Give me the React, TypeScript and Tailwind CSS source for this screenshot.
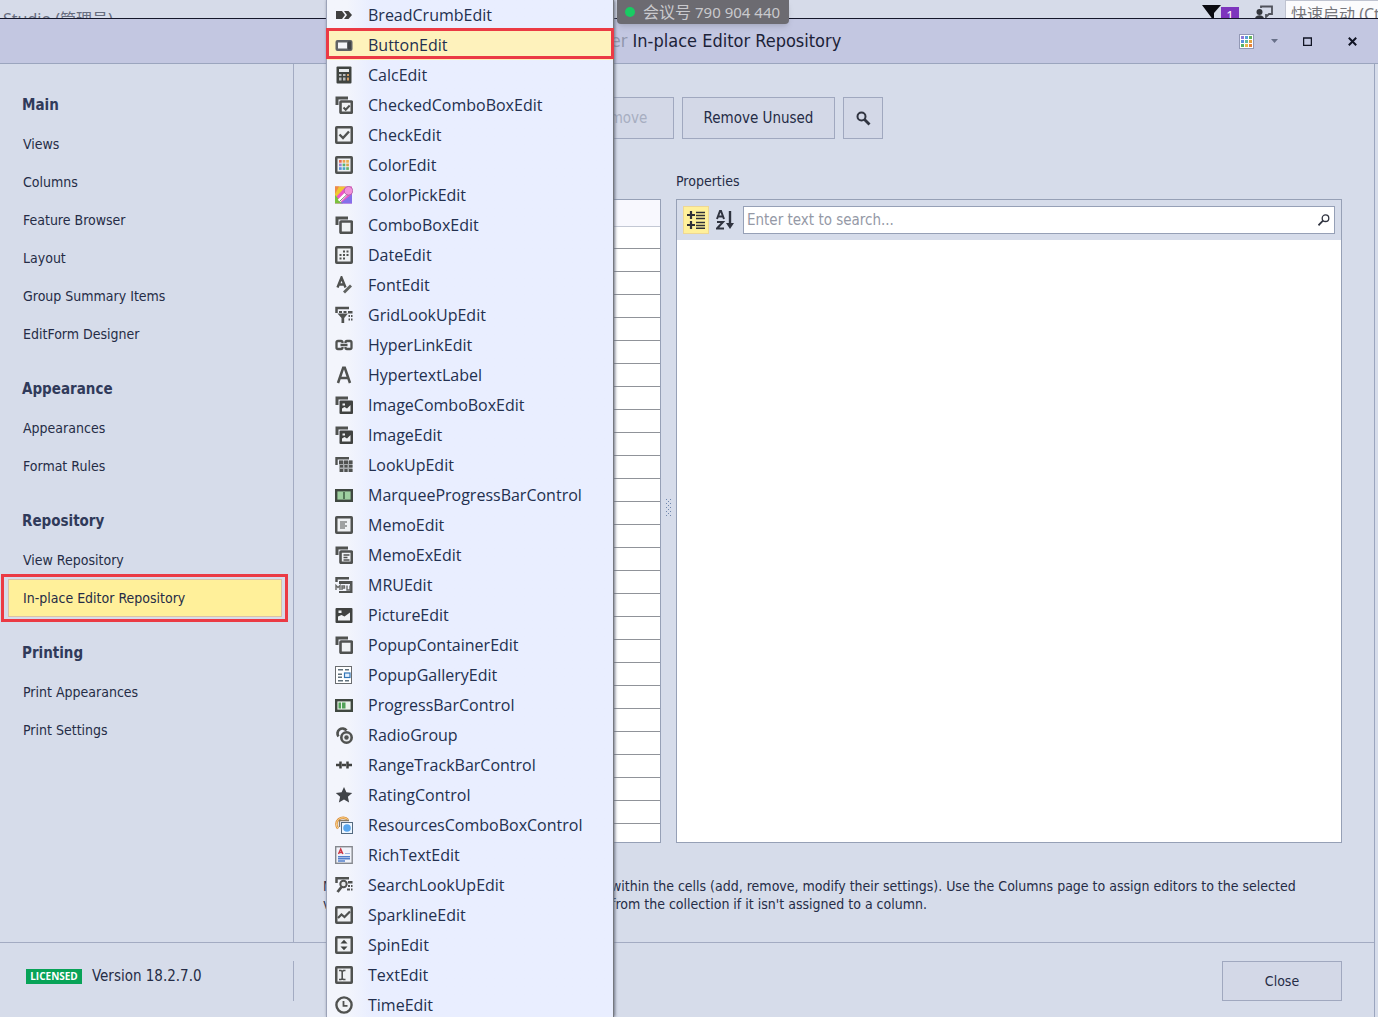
import type { ReactNode } from "react";
import { clsx } from "clsx";

interface NavGroup {
  title: string;
  items: string[];
}

const NAV_GROUPS: NavGroup[] = [
  {
    title: "Main",
    items: [
      "Views",
      "Columns",
      "Feature Browser",
      "Layout",
      "Group Summary Items",
      "EditForm Designer",
    ],
  },
  { title: "Appearance", items: ["Appearances", "Format Rules"] },
  { title: "Repository", items: ["View Repository", "In-place Editor Repository"] },
  { title: "Printing", items: ["Print Appearances", "Print Settings"] },
];

const SELECTED_PAGE = "In-place Editor Repository";
const SELECTED_EDITOR = "ButtonEdit";
const GRID_ROWS = 26;

const INK = "#505250";
const BACK_SHEET = <path d="M2 9V2h11" fill="none" stroke={INK} strokeWidth="3" />;
const FRAME = <rect x="1.25" y="1.25" width="15.5" height="15.5" rx="0.5" fill="#f0f2f4" stroke={INK} strokeWidth="2.5" />;
const FRONT_SHEET = (
  <>
    {BACK_SHEET}
    <rect x="5.5" y="5.5" width="11.300" height="11.300" rx="0.5" fill="#f0f2f4" stroke={INK} strokeWidth="2.6" />
  </>
);
const GRID_CELLS = (
  <>
    <path d="M4 4.500h13.500V16H4z" fill="#a9acae" />
    <path
      d="M4 4.500h4v3.500H4zM9 4.500h4v3.500H9zM14 4.500h3.500v3.500H14zM5 9h3v2.500H5zM9.500 9h3v2.500h-3zM14 9h3.500v2.500H14zM5 13h3v3H5zM9.500 13h3v3h-3zM14 13h3.500v3H14z"
      fill={INK}
    />
  </>
);
const SWATCHES = ["#e86a52", "#f0a050", "#e9b14e", "#9b7fd1", "#58b072", "#d8a24a", "#5a92d8", "#4ca6c8", "#63b36b"];
const SKIN_SWATCHES = ["#8f7ad8", "#58a0dc", "#62b45c", "#5d8fe0", "#63b9a0", "#e3a13c", "#55b06a", "#e9b94a", "#e58038"];

interface SwatchesProps {
  x: number;
  y: number;
  size: number;
  step: number;
  colors?: string[];
}

function Swatches({ x, y, size, step, colors = SWATCHES }: SwatchesProps) {
  return (
    <>
      {colors.map((color, i) => (
        <rect
          key={i}
          x={x + (i % 3) * step}
          y={y + Math.floor(i / 3) * step}
          width={size}
          height={size}
          fill={color}
        />
      ))}
    </>
  );
}

const PICTURE_FRONT = (
  <>
    {BACK_SHEET}
    <rect x="4.500" y="4.500" width="13.500" height="13.500" rx="1" fill="#404240" />
    <path d="M7 15.500v-3l2.500-1.500 2.500 1.500 3.500-3.500v6.500z" fill="#f0f2f4" />
    <rect x="7.500" y="7.500" width="2.500" height="2" fill="#f0f2f4" />
  </>
);

const EDITORS: { name: string; icon: ReactNode }[] = [
  {
    name: "BreadCrumbEdit",
    icon: (
      <>
        <path d="M1 5h6l3 4-3 4H1z" fill="#404040" />
        <path d="M9 5h4.500L17 9l-3.500 4H9l3-4z" fill="#404040" />
      </>
    ),
  },
  {
    name: "ButtonEdit",
    icon: (
      <>
        <rect x="0.500" y="4" width="17" height="11" rx="2" fill="#606265" />
        <rect x="3" y="6.500" width="9" height="6" fill="#f5f5f8" />
        <rect x="13" y="5.500" width="3" height="8" fill="#404245" />
      </>
    ),
  },
  {
    name: "CalcEdit",
    icon: (
      <>
        <rect x="1.500" y="0.500" width="15" height="17" rx="1" fill="#404440" />
        <rect x="4" y="3" width="10" height="3" fill="#e9ecee" />
        <path d="M4 8h2.500v2H4zM8 8h2.500v2H8zM4 11.500h2.500v3H4zM8 11.500h2.500v3H8z" fill="#b9bbbc" />
        <path d="M12 8h2v2h-2zM12 11.500h2v3h-2z" fill="#d09a62" />
      </>
    ),
  },
  {
    name: "CheckedComboBoxEdit",
    icon: (
      <>
        {FRONT_SHEET}
        <path d="m8.500 11.500 2.200 2.200 4-4.200" fill="none" stroke={INK} strokeWidth="2" />
      </>
    ),
  },
  {
    name: "CheckEdit",
    icon: (
      <>
        {FRAME}
        <path d="m4.500 8.500 3.500 3.500 6-6.500" fill="none" stroke={INK} strokeWidth="2.400" />
      </>
    ),
  },
  {
    name: "ColorEdit",
    icon: (
      <>
        {FRAME}
        <Swatches x={4} y={4} size={2.7} step={3.6} />
      </>
    ),
  },
  {
    name: "ColorPickEdit",
    icon: (
      <>
        <rect x="0" y="0.500" width="17" height="17" fill="#ee55c8" />
        <path d="M0 .5h11L0 12z" fill="#efc832" />
        <path d="M0 .5h4L0 8z" fill="#ee8a4a" />
        <path d="M0 17.500V9l8 8.500z" fill="#7cc23e" />
        <path d="M5 17.500 17 8v9.500z" fill="#8470ea" />
        <path d="m11 8-7 7" stroke="#fff" strokeWidth="3.500" />
        <path d="m12.500 8-8 7.500" stroke="#555" strokeWidth=".8" />
        <circle cx="13.500" cy="4.800" r="4.300" fill="#f290da" stroke="#a75b9d" strokeWidth=".8" />
      </>
    ),
  },
  { name: "ComboBoxEdit", icon: FRONT_SHEET },
  {
    name: "DateEdit",
    icon: (
      <>
        {FRAME}
        <path
          d="M8 4.500h2v2H8zM11.500 4.500h2v2h-2zM4.500 8h2v2h-2zM8 8h2v2H8zM11.500 8h2v2h-2zM4.500 11.500h2v2h-2zM8 11.500h2v2H8z"
          fill={INK}
        />
      </>
    ),
  },
  {
    name: "FontEdit",
    icon: (
      <>
        <path d="m2.500 11.500 4-10 4 10M4 8.500h5" fill="none" stroke={INK} strokeWidth="2.400" />
        <path d="m9 16.500 7-7" stroke="#606360" strokeWidth="2.800" />
      </>
    ),
  },
  {
    name: "GridLookUpEdit",
    icon: (
      <>
        <path d="M1.500 7V2H14" fill="none" stroke={INK} strokeWidth="2.500" />
        <path d="M4 5h3v2H4zM8.500 5h3v2h-3zM13 5h4.500v2.500H13zM13.500 9h1.500v2h-1.500zM16 9h1.500v2H16zM13.500 12.500h1.500v2h-1.500zM16 12.500h1.500v2H16z" fill={INK} />
        <path d="M2.500 7.500H13l-3.800 4.500v5H6.500v-5z" fill={INK} />
      </>
    ),
  },
  {
    name: "HyperLinkEdit",
    icon: (
      <path
        d="M7.500 7V6.500Q7.500 5 6 5H3Q1.500 5 1.500 6.500v5Q1.500 13 3 13h3q1.500 0 1.500-1.500V11M10.500 7V6.500Q10.500 5 12 5h3q1.500 0 1.500 1.500v5Q16.500 13 15 13h-3q-1.500 0-1.500-1.500V11M5.500 9h7"
        fill="none"
        stroke={INK}
        strokeWidth="2.300"
      />
    ),
  },
  {
    name: "HypertextLabel",
    icon: <path d="M3 17 8.200 1.800h1.600L15 17M5 12h8" fill="none" stroke={INK} strokeWidth="2.500" />,
  },
  { name: "ImageComboBoxEdit", icon: PICTURE_FRONT },
  { name: "ImageEdit", icon: PICTURE_FRONT },
  {
    name: "LookUpEdit",
    icon: (
      <>
        <path d="M1.500 9V2.300H14" fill="none" stroke={INK} strokeWidth="2.400" />
        {GRID_CELLS}
      </>
    ),
  },
  {
    name: "MarqueeProgressBarControl",
    icon: (
      <>
        <rect x="1.200" y="4.200" width="15.600" height="10.600" fill="#9fd0a0" stroke="#404840" strokeWidth="2.400" />
        <path d="M9 6v7" stroke="#3c5c40" strokeWidth="1.500" />
      </>
    ),
  },
  {
    name: "MemoEdit",
    icon: (
      <>
        {FRAME}
        <path d="M5 6h7M5 8h5M5 10h7M5 12h5" stroke={INK} strokeWidth="1.200" />
      </>
    ),
  },
  {
    name: "MemoExEdit",
    icon: (
      <>
        {FRONT_SHEET}
        <path d="M8.500 9h6M8.500 11.500h4M8.500 14h6" stroke={INK} strokeWidth="1.300" />
      </>
    ),
  },
  {
    name: "MRUEdit",
    icon: (
      <>
        <path d="M1.500 6V2.300H14" fill="none" stroke={INK} strokeWidth="2.400" />
        <path d="M4 5h13.500v12H4v-2h11V8H4z" fill={INK} />
        <path d="M1 14V9.500l2 2 2-2V14M7 14V10h2.500v2H7M12 9.500V14h3V9.500" fill="none" stroke="#686a68" strokeWidth="1.400" />
      </>
    ),
  },
  {
    name: "PictureEdit",
    icon: (
      <>
        <rect x="0.500" y="2" width="17" height="15" rx="1" fill="#404240" />
        <path d="M3 14.500v-4L6.500 9l3 1.500L15 6.500v8z" fill="#f0f2f4" />
        <rect x="3.500" y="4.500" width="3" height="2.500" fill="#f0f2f4" />
      </>
    ),
  },
  { name: "PopupContainerEdit", icon: FRONT_SHEET },
  {
    name: "PopupGalleryEdit",
    icon: (
      <>
        <rect x="0.500" y="0.500" width="16" height="17" fill="#fff" stroke="#6a6d70" />
        <path d="M3 3h5v1.500H3zM10 3h4v1.500h-4zM3 7.500h4V9H3zM3 10.500h4V12H3zM3 14h5v1.500H3zM10 14h4v1.500h-4z" fill="#60717c" />
        <rect x="9.500" y="7" width="5.500" height="4.500" fill="#e1efff" stroke="#3275b5" strokeWidth="1.200" />
      </>
    ),
  },
  {
    name: "ProgressBarControl",
    icon: (
      <>
        <rect x="1.200" y="4.200" width="15.600" height="10.600" fill="#eaf3ea" stroke="#404840" strokeWidth="2.400" />
        <path d="M3.500 6.500H6v6H3.500zM7 6.500h3.500v6H7z" fill="#51a257" />
      </>
    ),
  },
  {
    name: "RadioGroup",
    icon: (
      <>
        <path d="M3.500 10.500a5 5 0 1 1 8-6" fill="none" stroke={INK} strokeWidth="2.700" />
        <circle cx="11.500" cy="11.500" r="5.200" fill="#e8eaec" stroke={INK} strokeWidth="2.600" />
        <circle cx="11.500" cy="11.500" r="2.200" fill={INK} />
      </>
    ),
  },
  {
    name: "RangeTrackBarControl",
    icon: <path d="M1 9h4M7 9h4M13 9h4M5.500 5.500v7M12.500 5.500v7" stroke="#404240" strokeWidth="2.500" />,
  },
  {
    name: "RatingControl",
    icon: (
      <path d="m9 1 2.400 5.300 5.800.6-4.300 3.900 1.200 5.700L9 13.600l-5.100 2.900 1.200-5.700L.8 6.900l5.800-.6z" fill="#404348" />
    ),
  },
  {
    name: "ResourcesComboBoxControl",
    icon: (
      <>
        <path d="M3 12.500A6 6 0 1 1 13 4" fill="none" stroke="#e0913a" strokeWidth="2.500" />
        <path d="M3 12.500A6 6 0 1 1 13 4" fill="none" stroke="#f7d690" strokeWidth="1" />
        <path d="M4.500 11V4.500H14" fill="none" stroke="#8a7c66" strokeWidth="1.300" />
        <rect x="6.500" y="6.500" width="11" height="11" fill="#edf6ff" stroke="#546a80" />
        <circle cx="12" cy="12" r="3.800" fill="#58a6ee" />
      </>
    ),
  },
  {
    name: "RichTextEdit",
    icon: (
      <>
        <rect x="0.700" y="0.700" width="16.500" height="16.600" fill="#f1f3fa" stroke="#85888e" strokeWidth="1.400" />
        <path d="m3.500 8 2.200-5 2.200 5M4.500 6.500H7" fill="none" stroke="#cd3946" strokeWidth="1.400" />
        <path d="M10 7.500h5" stroke="#9cb4dd" />
        <path d="M3 10h12v1.500H3zM3 12h12v1.500H3zM3 14.200h7v1.500H3z" fill="#5280cc" />
      </>
    ),
  },
  {
    name: "SearchLookUpEdit",
    icon: (
      <>
        <path d="M1.500 7V2.300H14" fill="none" stroke={INK} strokeWidth="2.500" />
        <circle cx="8.500" cy="8" r="3.200" fill="#e8eaec" stroke={INK} strokeWidth="2" />
        <path d="m6.500 11-4 5" stroke={INK} strokeWidth="2.800" />
        <path d="M13 5h4.500v2.500H13zM13 9h2v2h-2zM16 9h1.500v2H16zM12 12.500h3v2h-3zM16 12.500h1.500v2H16z" fill={INK} />
      </>
    ),
  },
  {
    name: "SparklineEdit",
    icon: (
      <>
        {FRAME}
        <path d="m3 12 3.500-3.500L9.500 11 15 5.500" fill="none" stroke={INK} strokeWidth="2.200" />
      </>
    ),
  },
  {
    name: "SpinEdit",
    icon: (
      <>
        {FRAME}
        <path d="m9 3.800 3.500 3.700h-7zM9 14.200 5.500 10.500h7z" fill="#404340" />
      </>
    ),
  },
  {
    name: "TextEdit",
    icon: (
      <>
        {FRAME}
        <path d="M4 4.500h2l1.200 1 1.300-1h2M4 13.500h2l1.200-1 1.300 1h2M7.200 5v8" fill="none" stroke={INK} strokeWidth="1.600" />
      </>
    ),
  },
  {
    name: "TimeEdit",
    icon: (
      <>
        <circle cx="9" cy="9" r="7.600" fill="#f0f2f4" stroke={INK} strokeWidth="2.400" />
        <path d="M8.500 5v4.800h4" fill="none" stroke={INK} strokeWidth="1.800" />
      </>
    ),
  },
];

function IdeStrip() {
  return (
    <div className="flex h-[18px] shrink-0 items-start justify-between overflow-hidden bg-[#d6dbe9] font-['Noto_Sans','Noto_Sans_CJK_SC',sans-serif]">
      <span className="pt-[9px] pl-[3px] text-base leading-5 text-[#666c7e]">Studio (管理员)</span>
      <div className="flex">
        <svg className="mt-[5px] h-4 w-[19px]" viewBox="0 0 19 16" aria-hidden="true">
          <path d="M0 0h19l-7 8v8z" fill="#0a0a10" />
        </svg>
        <span className="mt-[7px] h-4 w-[18px] bg-[#7d35bd] text-center text-[13px] leading-4 text-white">1</span>
        <svg className="mt-[5px] ml-4 h-4 w-[18px]" viewBox="0 0 18 16" aria-hidden="true">
          <path d="M6 3V1.500h11V9h-3l-3 3V9" fill="none" stroke="#50535c" strokeWidth="1.800" />
          <circle cx="4.500" cy="7" r="3" fill="#33363d" />
          <path d="M0 14c0-5 9-5 9 0z" fill="#33363d" />
        </svg>
        <span className="ml-3 w-[93px] overflow-hidden border-t border-l border-[#bfc3d0] bg-[#fbfbfd] pt-[3px] pl-[5px] text-base leading-5 whitespace-nowrap text-[#77777c]">
          快速启动 (Ctrl+Q)
        </span>
      </div>
    </div>
  );
}

function TitleBar() {
  return (
    <header className="flex h-[46px] shrink-0 items-center border-t border-b border-t-[#15172b] border-b-[#9ba5be] bg-[#c3c7e1]">
      <div className="flex-1" />
      <h1 className="text-lg text-[#1c2238]">
        <span className="text-[#9096ac]">Grid Designer</span> In-place Editor Repository
      </h1>
      <div className="flex flex-1 items-center justify-end pr-[21px]">
        <button type="button" aria-label="Skins" className="mr-[17px]">
          <svg className="h-[15px] w-[15px]" viewBox="0 0 15 15" aria-hidden="true">
            <rect x="0.500" y="0.500" width="14" height="14" fill="#fff" stroke="#9298b5" />
            <Swatches x={2} y={2} size={3} step={4} colors={SKIN_SWATCHES} />
          </svg>
        </button>
        <button type="button" aria-label="Skin options" className="mr-[25px]">
          <svg className="h-1 w-[7px]" viewBox="0 0 7 4" aria-hidden="true">
            <path d="M0 0h7L3.500 4z" fill="#687089" />
          </svg>
        </button>
        <button type="button" aria-label="Maximize" className="mr-9">
          <svg className="h-[9px] w-[9px]" viewBox="0 0 9 9" aria-hidden="true">
            <path d="M.5 1v7.500h8V1M0 1h9" fill="none" stroke="#111424" strokeWidth="1.500" />
          </svg>
        </button>
        <button type="button" aria-label="Close window">
          <svg className="h-[9px] w-[9px]" viewBox="0 0 9 9" aria-hidden="true">
            <path d="m.8.8 7.400 7.400M8.200.8.800 8.200" stroke="#111424" strokeWidth="2" />
          </svg>
        </button>
      </div>
    </header>
  );
}

function Sidebar() {
  return (
    <nav className="flex w-[294px] shrink-0 flex-col gap-4 border-r border-[#a3abc2] pt-[21px]">
      {NAV_GROUPS.map((group) => (
        <section key={group.title}>
          <h2 className="flex h-10 items-center pl-[22px] text-[15px] font-bold text-[#303a5a]">{group.title}</h2>
          <ul>
            {group.items.map((item) => {
              const selected = item === SELECTED_PAGE;
              return (
                <li key={item} className="relative pr-[11px] pl-2">
                  <a
                    href="#"
                    aria-current={selected ? "page" : undefined}
                    className={clsx(
                      "flex h-[38px] items-center border pl-[14px]",
                      selected ? "border-[#dac2a8] bg-[#fff09a]" : "border-transparent"
                    )}
                  >
                    {item}
                  </a>
                  {selected && (
                    <span className="pointer-events-none absolute -top-[5px] right-[5px] -bottom-[5px] left-px border-[3px] border-[#eb3a44]" />
                  )}
                </li>
              );
            })}
          </ul>
        </section>
      ))}
    </nav>
  );
}

function EditorToolbar() {
  const base = "h-[42px] border border-[#a0a8bf] bg-[#d3d8e7]";
  return (
    <div className="flex gap-2 pl-2 text-[15px]">
      <button type="button" aria-label="Add" className={clsx(base, "w-[227px]")} />
      <button type="button" disabled className={clsx(base, "w-[108px] text-[#a7aec1]")}>
        Remove
      </button>
      <button type="button" className={clsx(base, "w-[153px]")}>
        Remove Unused
      </button>
      <button type="button" aria-label="Search" className={clsx(base, "flex w-10 items-center justify-center")}>
        <svg className="h-[15px] w-[15px]" viewBox="0 0 15 15" aria-hidden="true">
          <circle cx="5.500" cy="5.500" r="4" fill="none" stroke="#303440" strokeWidth="2" />
          <path d="m8.500 8.500 5 5" stroke="#303440" strokeWidth="2.800" />
        </svg>
      </button>
    </div>
  );
}

function EditorsGrid() {
  return (
    <div className="ml-2 w-[330px] overflow-hidden border border-[#96a0b6] bg-white">
      <table className="w-full" aria-label="Editors">
        <thead>
          <tr className="h-[26px] border-b border-[#c3c8d4] bg-[#f8f8fe]">
            <th />
          </tr>
        </thead>
        <tbody>
          {Array.from({ length: GRID_ROWS }, (_, i) => (
            <tr key={i} className={clsx("border-b border-[#909399]", i === 0 ? "h-[22px]" : "h-[23px]")}>
              <td />
            </tr>
          ))}
        </tbody>
      </table>
    </div>
  );
}

function Splitter() {
  return (
    <div className="flex w-[15px] shrink-0 items-center justify-center">
      <svg className="mb-[26px] h-[18px] w-[6px]" viewBox="0 0 6 18" aria-hidden="true">
        {Array.from({ length: 9 }, (_, i) => (
          <path key={i} d={i % 2 ? `M2 ${i * 2}h1v1H2z` : `M0 ${i * 2}h1v1H0zM4 ${i * 2}h1v1H4z`} fill="#6f86ad" />
        ))}
      </svg>
    </div>
  );
}

function PropertiesPanel() {
  return (
    <div className="flex min-w-0 flex-1 flex-col border border-[#96a0b6] bg-white">
      <div className="flex h-10 shrink-0 items-center bg-[#d6dcea] pr-[6px] pl-[6px]">
        <button
          type="button"
          aria-label="Categorized"
          className="flex h-7 w-[26px] items-center justify-center border border-[#eed794] bg-[#fff09a]"
        >
          <svg className="h-[18px] w-[18px]" viewBox="0 0 18 18" aria-hidden="true">
            <path d="M0 4h8M4 0v8M0 14h8M4 10v8" stroke="#303038" strokeWidth="2.200" />
            <path d="M9 1.500h9M9 4.500h9M9 7.500h9M9 11.500h9M9 14.500h9M9 17.200h9" stroke="#303038" strokeWidth="1.500" />
          </svg>
        </button>
        <button type="button" aria-label="Alphabetical" className="flex h-7 w-[31px] items-center justify-center">
          <svg className="h-5 w-[18px]" viewBox="0 0 18 20" aria-hidden="true">
            <path d="m1 9 3-8h1l3 8M2 6.500h5M1 12h6l-6 6.500h7" fill="none" stroke="#303440" strokeWidth="2" />
            <path d="M14 1v14" stroke="#303440" strokeWidth="2.400" />
            <path d="M10 13h8l-4 6z" fill="#303440" />
          </svg>
        </button>
        <div className="ml-[3px] flex h-7 min-w-0 flex-1 items-center border border-[#96a0b6] bg-white pr-1">
          <input
            type="text"
            aria-label="Search properties"
            placeholder="Enter text to search..."
            className="min-w-0 flex-1 pl-[3px] text-[15px] outline-none placeholder:text-[#9599a6]"
          />
          <svg className="h-3 w-3" viewBox="0 0 12 12" aria-hidden="true">
            <circle cx="7.500" cy="4.200" r="3.300" fill="none" stroke="#303440" strokeWidth="1.300" />
            <path d="M5 6.700.5 11.300" stroke="#303440" strokeWidth="1.700" />
          </svg>
        </div>
      </div>
    </div>
  );
}

function EditorMenu() {
  return (
    <div
      role="menu"
      className="absolute top-0 bottom-0 left-[326px] w-[288px] overflow-hidden border-r border-l border-r-[#75787f] border-l-[#9ca3b8] bg-linear-to-r from-[#f3f5fc] from-[20px] to-[#e9eeff] to-[44px] font-['Open_Sans','Noto_Sans',sans-serif] text-base text-[#23304f] shadow-[1px_0_3px_#6b7080]"
    >
      {EDITORS.map(({ name, icon }) => (
        <button
          key={name}
          type="button"
          role="menuitem"
          className={clsx("flex h-[30px] w-full items-center gap-[15px] pl-2", name === SELECTED_EDITOR && "bg-[#fef2bc]")}
        >
          <svg className="h-[18px] w-[18px] shrink-0" viewBox="0 0 18 18" aria-hidden="true">
            {icon}
          </svg>
          {name}
        </button>
      ))}
    </div>
  );
}

function MeetingPill() {
  return (
    <div className="absolute top-0 left-[617px] flex h-6 w-[172px] items-center gap-1 rounded-b bg-[#6c6b71] pl-2 font-['Noto_Sans','Noto_Sans_CJK_SC',sans-serif] leading-6 whitespace-nowrap text-[#c9c9cd] shadow-md">
      <span className="mr-1 h-[10px] w-[10px] rounded-full bg-[#19cb63]" />
      <span className="text-base">会议号</span>
      <span className="text-[15px]">790 904 440</span>
    </div>
  );
}

export default function App() {
  return (
    <div className="relative flex h-screen flex-col overflow-hidden bg-[#d6dcea] font-['DejaVu_Sans_Condensed','Noto_Sans',sans-serif] text-[14px] text-[#252c46]">
      <IdeStrip />
      <div className="flex min-h-0 flex-1 flex-col">
        <TitleBar />
        <div className="mr-[3px] flex min-h-0 flex-1 flex-col border-r border-[#9ba5be]">
          <div className="flex min-h-0 flex-1">
            <Sidebar />
            <main className="flex min-w-0 flex-1 flex-col pt-[33px] pr-8 pl-[29px]">
              <EditorToolbar />
              <h2 className="mt-8 h-7 pl-[353px] leading-5">Properties</h2>
              <div className="flex h-[644px] shrink-0">
                <EditorsGrid />
                <Splitter />
                <PropertiesPanel />
              </div>
              <div className="mt-[34px] flex leading-[18px] whitespace-nowrap">
                <p className="w-[288px] shrink-0">
                  Modify
                  <br />
                  view
                </p>
                <p>
                  within the cells (add, remove, modify their settings). Use the Columns page to assign editors to the selected
                  <br />
                  from the collection if it isn't assigned to a column.
                </p>
              </div>
            </main>
          </div>
          <footer className="flex h-[75px] shrink-0 border-t border-[#a3abc2] pt-[18px]">
            <div className="flex h-10 w-[294px] items-center gap-[10px] border-r border-[#a3abc2] pb-[10px] pl-[26px]">
              <span className="flex h-[15px] w-14 items-center justify-center bg-[#08a358] font-['Open_Sans',sans-serif] text-[10px] font-bold text-white">
                LICENSED
              </span>
              <span className="text-[15px]">Version 18.2.7.0</span>
            </div>
            <button type="button" className="mr-8 ml-auto h-10 w-[120px] border border-[#a0a8bf] bg-[#d3d8e7]">
              Close
            </button>
          </footer>
        </div>
      </div>
      <EditorMenu />
      <span className="pointer-events-none absolute top-7 left-[326px] h-[31px] w-[288px] border-[3px] border-[#eb3a44]" />
      <MeetingPill />
    </div>
  );
}
